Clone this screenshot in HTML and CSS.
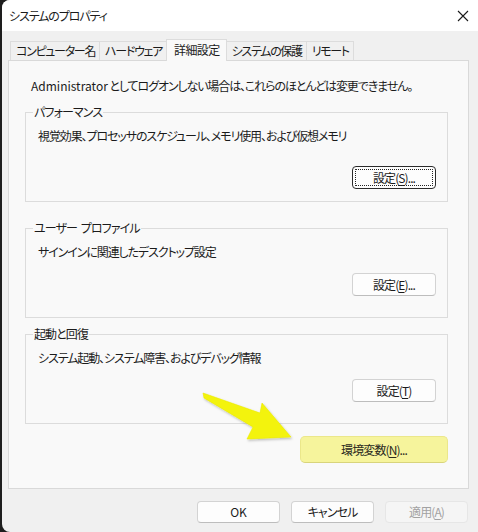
FILE: index.html
```html
<!DOCTYPE html>
<html lang="ja">
<head>
<meta charset="utf-8">
<title>システムのプロパティ</title>
<link rel="stylesheet" href="styles.css">
</head>
<body>
<div class="window">
  <div class="titlebar">
    <span class="title">システムのプロパティ</span>
    <svg class="close" width="12" height="12" viewBox="0 0 12 12"><path d="M1 1 L11 11 M11 1 L1 11" stroke="#1a1a1a" stroke-width="1.1" fill="none"/></svg>
  </div>
  <div class="content">
    <div class="tabs">
      <div class="tab">コンピューター名</div>
      <div class="tab">ハードウェア</div>
      <div class="tab active">詳細設定</div>
      <div class="tab">システムの保護</div>
      <div class="tab">リモート</div>
    </div>
    <div class="panel">
      <p class="notice"><span class="latin">Administrator</span> としてログオンしない場合は、これらのほとんどは変更できません。</p>
      <div class="group first">
        <div class="legend">パフォーマンス</div>
        <p class="desc">視覚効果、プロセッサのスケジュール、メモリ使用、および仮想メモリ</p>
        <div class="actions low"><button class="btn focus">設定(<u>S</u>)...</button></div>
      </div>
      <div class="group second">
        <div class="legend">ユーザー<span class="gap"> </span>プロファイル</div>
        <p class="desc">サインインに関連したデスクトップ設定</p>
        <div class="actions"><button class="btn">設定(<u>E</u>)...</button></div>
      </div>
      <div class="group third">
        <div class="legend">起動と回復</div>
        <p class="desc">システム起動、システム障害、およびデバッグ情報</p>
        <div class="actions"><button class="btn">設定(<u>T</u>)</button></div>
      </div>
      <div class="env-row"><button class="btn env">環境変数(<u>N</u>)...</button></div>
    </div>
    <div class="footer">
      <button class="btn wide latin">OK</button>
      <button class="btn wide">キャンセル</button>
      <button class="btn wide disabled">適用(<u>A</u>)</button>
    </div>
  </div>
  <svg class="arrow" width="110" height="64" viewBox="0 0 110 64">
    <defs>
      <filter id="sh" x="-20%" y="-20%" width="140%" height="140%">
        <feDropShadow dx="1" dy="1.5" stdDeviation="1.2" flood-color="#000" flood-opacity="0.25"/>
      </filter>
    </defs>
    <polygon points="8,8 65,28 67,18 96,52 52,54 58,42 9,13" fill="#f3f30a" filter="url(#sh)" stroke="#eded00" stroke-width="0.6" stroke-linejoin="round"/>
  </svg>
</div>
</body>
</html>
```
FILE: styles.css
```css
* { box-sizing: border-box; }
html, body { margin: 0; padding: 0; }
body {
  background: #1e1e1e;
  width: 478px;
  height: 532px;
  overflow: hidden;
  font-family: "Noto Sans CJK JP", "Noto Sans", sans-serif;
  font-size: 12px;
  color: #1b1b1b;
  font-feature-settings: "palt";
  letter-spacing: -0.9px;
}
.latin { letter-spacing: 0; }
.gap { letter-spacing: 1px; }
.window {
  position: relative;
  margin-left: 2px;
  width: 476px;
  height: 532px;
  background: #f0f0f0;
  border-radius: 8px 0 0 8px;
  overflow: hidden;
  display: flex;
  flex-direction: column;
}
.titlebar {
  height: 31px;
  background: #ffffff;
  display: flex;
  align-items: center;
  justify-content: space-between;
  padding-left: 7px;
  padding-right: 9px;
  flex: none;
}
.title { line-height: 16px; letter-spacing: -1.1px; }
.close { display: block; }
.content {
  padding: 0 9px 0 6px;
  display: flex;
  flex-direction: column;
}
.tabs {
  display: flex;
  align-items: flex-end;
  height: 29px;
  padding-left: 2px;
  position: relative;
  z-index: 1;
}
.tab {
  height: 19px;
  line-height: 18px;
  padding: 0 4px 0 5px;
  border: 1px solid #dcdcdc;
  border-bottom: none;
  margin-right: -1px;
  background: #f0f0f0;
  white-space: nowrap;
  letter-spacing: -1.3px;
}
.tab.active {
  height: 22px;
  line-height: 20px;
  margin-bottom: -1px;
  background: #f9f9f9;
  padding: 0 6px 0 7px;
  position: relative;
  z-index: 2;
  letter-spacing: -0.6px;
}
.panel {
  height: 429px;
  border: 1px solid #d9d9d9;
  background: #f9f9f9;
  padding: 17px 20px 0 16px;
  display: flex;
  flex-direction: column;
}
p { margin: 0; line-height: 16px; }
.notice { margin-left: 6px; letter-spacing: -1.1px; }
.notice .latin { letter-spacing: 0; }
.group {
  height: 90px;
  border: 1px solid #dcdcdc;
  padding: 0 11px 0 12px;
  display: flex;
  flex-direction: column;
}
.group.first { margin-top: 18px; }
.group.second { margin-top: 26px; }
.group.third { margin-top: 16px; }
.legend {
  align-self: flex-start;
  margin: -9px 0 0 -5px;
  padding: 0 1px;
  line-height: 16px;
  background: #f9f9f9;
}
.desc { margin-top: 8px; letter-spacing: -1.1px; }
.actions {
  display: flex;
  justify-content: flex-end;
  margin-top: 13px;
}
.actions.low { margin-top: 22px; }
.btn {
  font-family: inherit;
  font-size: 12px;
  font-feature-settings: "palt";
  letter-spacing: -0.9px;
  color: #1b1b1b;
  width: 84px;
  height: 23px;
  padding: 0;
  line-height: 20px;
  background: #fdfdfd;
  border: 1px solid #d3d3d3;
  border-bottom-color: #bdbdbd;
  border-radius: 4px;
}
.btn.latin { letter-spacing: 0; }
.btn u { text-decoration-thickness: 1px; text-underline-offset: 2px; }
.btn.focus {
  border: 1px solid #2b2b2b;
  outline: 1px dotted #222;
  outline-offset: -4px;
}
.env-row {
  display: flex;
  justify-content: flex-end;
  margin-top: 12px;
}
.btn.env {
  width: 148px;
  height: 27px;
  background: #f6f49c;
  border: 1px solid #ebe78a;
  border-bottom-color: #d8d47c;
  border-radius: 5px;
  color: #2a2a20;
}
.footer {
  display: flex;
  justify-content: flex-end;
  gap: 11px;
  margin-top: 12px;
  padding-right: 1px;
}
.btn.wide { width: 83px; height: 22px; }
.btn.disabled {
  background: #f5f5f5;
  border-color: #e6e6e6;
  color: #a2a2a2;
}
.arrow {
  position: absolute;
  left: 193px;
  top: 385px;
}
```
